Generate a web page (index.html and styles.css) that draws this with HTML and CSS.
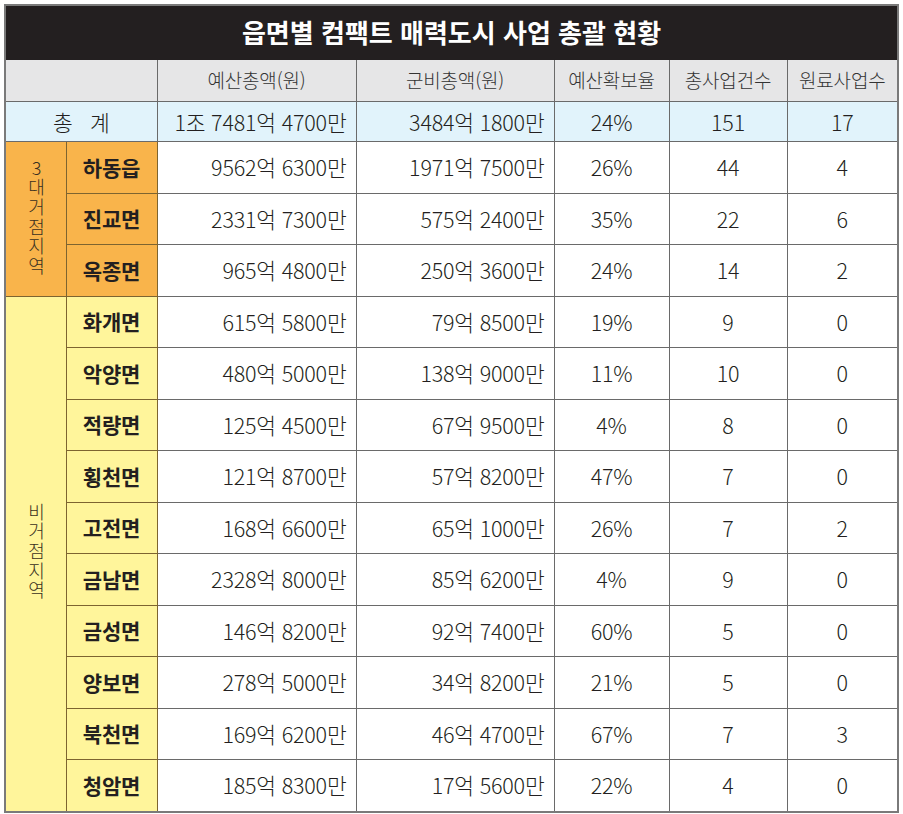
FILE: index.html
```html
<!DOCTYPE html>
<html lang="ko">
<head>
<meta charset="utf-8">
<title>읍면별 컴팩트 매력도시 사업 총괄 현황</title>
<link rel="stylesheet" href="styles.css">
</head>
<body>
<div class="page">
<table class="summary">
  <colgroup>
    <col class="c1"><col class="c2"><col class="c3"><col class="c4"><col class="c5"><col class="c6"><col class="c7">
  </colgroup>
  <thead>
    <tr class="title-row"><th colspan="7">읍면별 컴팩트 매력도시 사업 총괄 현황</th></tr>
    <tr class="head-row">
      <th colspan="2"></th>
      <th>예산총액(원)</th>
      <th>군비총액(원)</th>
      <th>예산확보율</th>
      <th>총사업건수</th>
      <th>원료사업수</th>
    </tr>
  </thead>
  <tbody>
    <tr class="total-row">
      <td colspan="2" class="ctr">총&nbsp;&nbsp;&nbsp;계</td>
      <td class="num">1조 7481억 4700만</td>
      <td class="num">3484억 1800만</td>
      <td class="ctr">24%</td>
      <td class="ctr">151</td>
      <td class="ctr">17</td>
    </tr>
    <tr class="data">
      <td rowspan="3" class="group orange"><span class="vtext">3대거점지역</span></td>
      <td class="name orange">하동읍</td>
      <td class="num">9562억 6300만</td><td class="num">1971억 7500만</td><td class="ctr">26%</td><td class="ctr">44</td><td class="ctr">4</td>
    </tr>
    <tr class="data">
      <td class="name orange">진교면</td>
      <td class="num">2331억 7300만</td><td class="num">575억 2400만</td><td class="ctr">35%</td><td class="ctr">22</td><td class="ctr">6</td>
    </tr>
    <tr class="data">
      <td class="name orange">옥종면</td>
      <td class="num">965억 4800만</td><td class="num">250억 3600만</td><td class="ctr">24%</td><td class="ctr">14</td><td class="ctr">2</td>
    </tr>
    <tr class="data">
      <td rowspan="10" class="group yellow"><span class="vtext">비거점지역</span></td>
      <td class="name yellow">화개면</td>
      <td class="num">615억 5800만</td><td class="num">79억 8500만</td><td class="ctr">19%</td><td class="ctr">9</td><td class="ctr">0</td>
    </tr>
    <tr class="data">
      <td class="name yellow">악양면</td>
      <td class="num">480억 5000만</td><td class="num">138억 9000만</td><td class="ctr">11%</td><td class="ctr">10</td><td class="ctr">0</td>
    </tr>
    <tr class="data">
      <td class="name yellow">적량면</td>
      <td class="num">125억 4500만</td><td class="num">67억 9500만</td><td class="ctr">4%</td><td class="ctr">8</td><td class="ctr">0</td>
    </tr>
    <tr class="data">
      <td class="name yellow">횡천면</td>
      <td class="num">121억 8700만</td><td class="num">57억 8200만</td><td class="ctr">47%</td><td class="ctr">7</td><td class="ctr">0</td>
    </tr>
    <tr class="data">
      <td class="name yellow">고전면</td>
      <td class="num">168억 6600만</td><td class="num">65억 1000만</td><td class="ctr">26%</td><td class="ctr">7</td><td class="ctr">2</td>
    </tr>
    <tr class="data">
      <td class="name yellow">금남면</td>
      <td class="num">2328억 8000만</td><td class="num">85억 6200만</td><td class="ctr">4%</td><td class="ctr">9</td><td class="ctr">0</td>
    </tr>
    <tr class="data">
      <td class="name yellow">금성면</td>
      <td class="num">146억 8200만</td><td class="num">92억 7400만</td><td class="ctr">60%</td><td class="ctr">5</td><td class="ctr">0</td>
    </tr>
    <tr class="data">
      <td class="name yellow">양보면</td>
      <td class="num">278억 5000만</td><td class="num">34억 8200만</td><td class="ctr">21%</td><td class="ctr">5</td><td class="ctr">0</td>
    </tr>
    <tr class="data">
      <td class="name yellow">북천면</td>
      <td class="num">169억 6200만</td><td class="num">46억 4700만</td><td class="ctr">67%</td><td class="ctr">7</td><td class="ctr">3</td>
    </tr>
    <tr class="data">
      <td class="name yellow">청암면</td>
      <td class="num">185억 8300만</td><td class="num">17억 5600만</td><td class="ctr">22%</td><td class="ctr">4</td><td class="ctr">0</td>
    </tr>
  </tbody>
</table>
</div>
</body>
</html>
```

FILE: styles.css
```css
html, body {
  margin: 0;
  padding: 0;
  background: #ffffff;
}

body {
  font-family: "Noto Sans CJK KR", "Noto Sans", sans-serif;
  color: #231f20;
}

.page {
  padding: 4px 6px 4px 4px;
}

.summary {
  width: 893px;
  border-collapse: collapse;
  table-layout: fixed;
  border: 2px solid #7a7a7a;
}

.c1 { width: 61px; }
.c2 { width: 91px; }
.c3 { width: 199px; }
.c4 { width: 198px; }
.c5 { width: 115px; }
.c6 { width: 118px; }
.c7 { width: 111px; }

.summary th,
.summary td {
  padding: 0;
  border: 1px solid #6a6a6a;
  font-size: 21.5px;
  font-weight: 300;
  line-height: 1.1;
  letter-spacing: -0.2px;
}

.title-row th {
  height: 53px;
  background: #231f20;
  color: #ffffff;
  font-size: 26px;
  font-weight: 700;
  text-align: center;
  border-color: #231f20;
  letter-spacing: 0;
}

.head-row th {
  height: 41px;
  background: #e6e6e7;
  font-weight: 300;
  font-size: 19px;
  color: #333;
  text-align: center;
}

.total-row td {
  height: 39px;
  background: #e1f3fb;
}

.data td {
  height: 50.5px;
  background: #ffffff;
}

.num {
  text-align: right;
  padding-right: 9px !important;
}

.ctr {
  text-align: center;
}

.summary td.name {
  font-weight: 700;
  font-size: 21px;
  text-align: center;
  color: #231f20;
  border-color: #7d6430;
}

.summary td.orange {
  background: #f9b44b;
}

.summary td.yellow {
  background: #fff59b;
}

.summary td.group {
  text-align: center;
  vertical-align: middle;
  border-color: #7d6430;
}

.vtext {
  display: inline-block;
  writing-mode: vertical-rl;
  text-orientation: upright;
  font-size: 18px;
  line-height: 1.2;
  letter-spacing: 1.6px;
  font-weight: 300;
  color: #3a3020;
}
```
